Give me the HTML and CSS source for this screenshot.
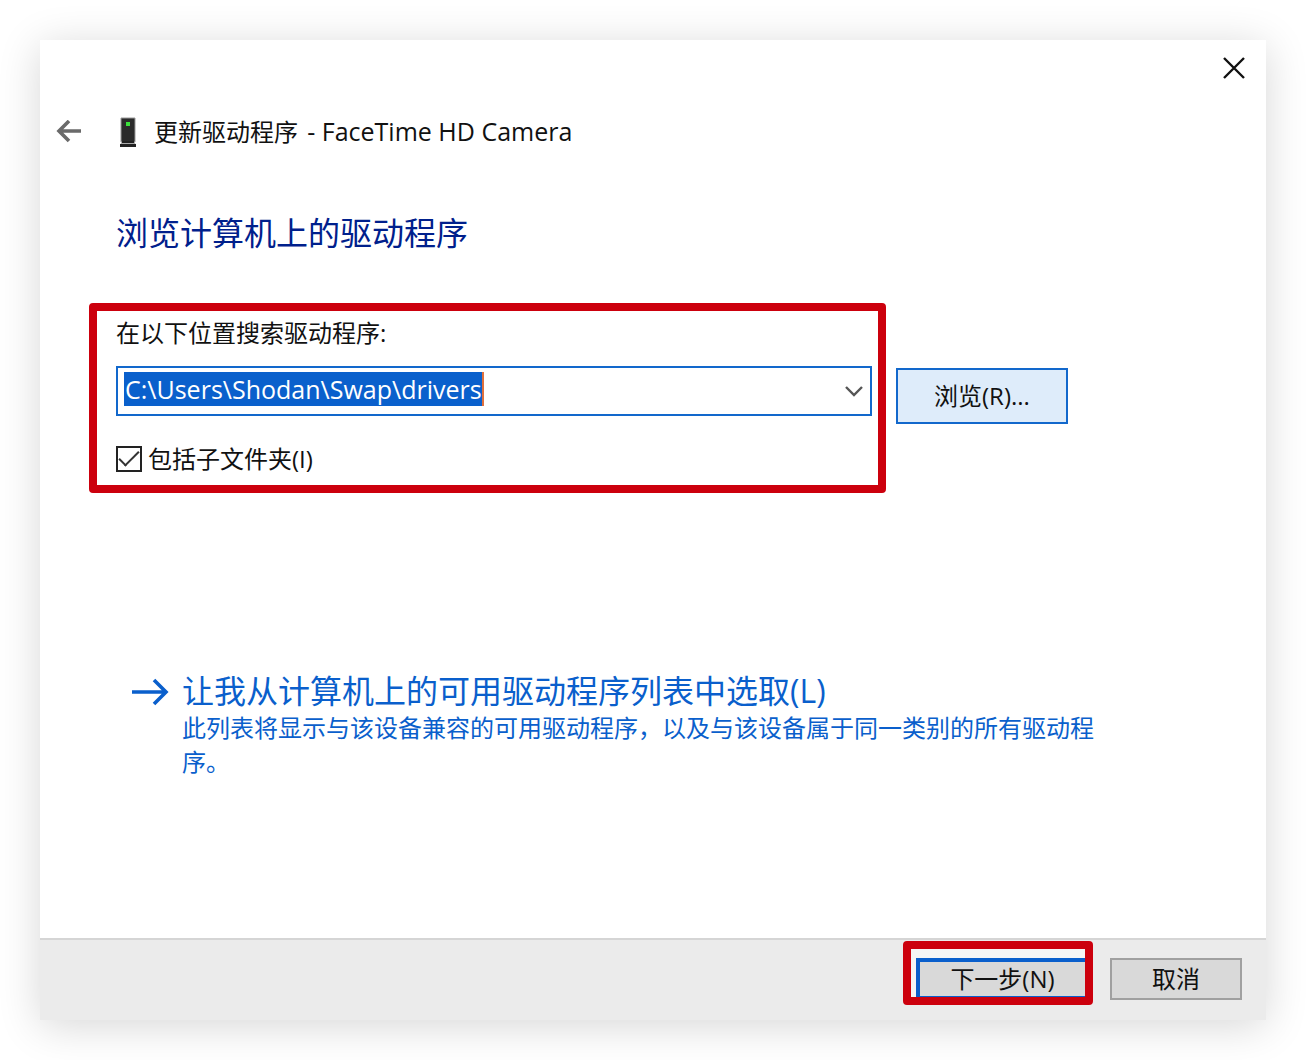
FILE: index.html
```html
<!DOCTYPE html>
<html lang="zh-CN">
<head>
	<meta charset="UTF-8">
	<title>更新驱动程序</title>
	<link rel="stylesheet" href="styles.css">
</head>
<body>
	<div class="dialog">
		<div class="titlebar">
			<button class="icon_btn" type="button" aria-label="关闭">
				<svg width="24" height="24" viewBox="0 0 24 24"><path d="M2 2L22 22M22 2L2 22" fill="none" stroke="#111" stroke-width="2.4"/></svg>
			</button>
		</div>
		<div class="header">
			<button class="icon_btn" type="button" aria-label="返回">
				<svg width="26" height="24" viewBox="0 0 26 24"><path d="M25 11H3M13 1L3 11L13 21" fill="none" stroke="#6a6a6a" stroke-width="3.6"/></svg>
			</button>
			<svg class="device" width="18" height="30" viewBox="0 0 18 30">
				<path d="M2 1H16V25H2Z" fill="#2b2b2b" stroke="#999" stroke-width="1"/>
				<path d="M3 24H15L17 28H1Z" fill="#aaa"/>
				<path d="M3 24H15V26H3ZM1 27H17V30H1Z" fill="#222"/>
				<path d="M7 5H11V9H7Z" fill="#3be03b"/>
			</svg>
			<p>更新驱动程序 <span class="device_name">- FaceTime HD Camera</span></p>
		</div>
		<div class="main">
			<h1>浏览计算机上的驱动程序</h1>
			<div class="search">
				<div class="mark">
					<label for="path">在以下位置搜索驱动程序:</label>
					<div class="combo">
						<input id="path" type="text" value="C:\Users\Shodan\Swap\drivers">
						<button class="icon_btn" type="button" aria-label="展开">
							<svg width="18" height="12" viewBox="0 0 18 12"><path d="M1 2L9 10L17 2" fill="none" stroke="#555" stroke-width="2.4"/></svg>
						</button>
					</div>
					<div class="check">
						<input id="sub" type="checkbox" checked>
						<label for="sub">包括子文件夹(I)</label>
					</div>
				</div>
				<button class="browse" type="button">浏览(R)...</button>
			</div>
			<a class="pick" href="#">
				<svg width="38" height="28" viewBox="0 0 38 28"><path d="M1 14H35M23 2L35 14L23 26" fill="none" stroke="#0a5fcc" stroke-width="3.6"/></svg>
				<span>
					<strong>让我从计算机上的可用驱动程序列表中选取(L)</strong>
					<small>此列表将显示与该设备兼容的可用驱动程序，以及与该设备属于同一类别的所有驱动程序。</small>
				</span>
			</a>
		</div>
		<div class="footer">
			<div class="mark_next">
				<button class="next" type="button">下一步(N)</button>
			</div>
			<button class="cancel" type="button">取消</button>
		</div>
	</div>
</body>
</html>
```
FILE: styles.css
```css
*{
	margin: 0;
	padding: 0;
	box-sizing: border-box;
}
body{
	min-height: 100vh;
	padding: 40px;
	display: flex;
	background: #fff;
	color: #111;
	font-family: "Open Sans", "Noto Sans CJK SC", sans-serif;
	font-size: 24px;
	line-height: 32px;
}
button{
	font: inherit;
	color: inherit;
}
svg{
	display: block;
	flex: none;
}
.dialog{
	flex: 1;
	display: flex;
	flex-direction: column;
	background: #fff;
	box-shadow: 0 6px 40px rgba(0,0,0,.16);
}
.icon_btn{
	border: none;
	background: none;
}
.titlebar{
	display: flex;
	justify-content: flex-end;
	padding: 16px 20px;
}
.header{
	display: flex;
	align-items: center;
	margin-top: 17px;
	padding: 2px 16px;
}
.device{
	margin: 0 17px 0 37px;
}
.device_name{
	margin-left: 3px;
	font-size: 25px;
}
.main{
	flex: 1;
	padding: 59px 160px 40px 49px;
}
h1{
	padding-left: 27px;
	font-size: 32px;
	line-height: 48px;
	font-weight: 400;
	color: #00208c;
}
.search{
	display: flex;
	align-items: flex-start;
	gap: 10px;
	margin-top: 46px;
	padding-right: 38px;
}
/* 红框标注 */
.mark{
	flex: 1;
	border: 8px solid #cc000d;
	border-radius: 4px;
	padding: 6px 6px 10px 19px;
}
.mark label{
	display: block;
}
.combo{
	display: flex;
	align-items: center;
	justify-content: space-between;
	height: 50px;
	margin-top: 17px;
	padding: 0 7px 0 6px;
	border: 2px solid #1268cc;
}
.combo input{
	field-sizing: content;
	height: 34px;
	margin-bottom: 4px;
	padding-left: 1px;
	border: none;
	border-right: 2px solid #e0703c;
	background: #0a60cc;
	color: #fff;
	font: inherit;
	font-size: 25px;
	outline: none;
}
.check{
	display: flex;
	align-items: center;
	gap: 6px;
	margin-top: 27px;
}
.check input{
	appearance: none;
	width: 26px;
	height: 26px;
	border: 2px solid #222;
	display: grid;
	place-items: center;
}
.check input:checked::before{
	content: '';
	width: 18px;
	height: 8px;
	margin-bottom: 6px;
	border: solid #333;
	border-width: 0 0 2px 2px;
	transform: rotate(-45deg);
}
.browse{
	width: 172px;
	height: 56px;
	margin-top: 65px;
	border: 2px solid #1268cc;
	background: #deecfa;
}
.pick{
	display: flex;
	align-items: flex-start;
	gap: 13px;
	margin-top: 178px;
	padding-left: 42px;
	color: #0a5fcc;
	text-decoration: none;
}
.pick svg{
	margin-top: 7px;
}
.pick strong{
	display: block;
	font-size: 32px;
	line-height: 40px;
	font-weight: 400;
}
.pick small{
	display: block;
	font-size: 24px;
	line-height: 34px;
}
.footer{
	display: flex;
	justify-content: flex-end;
	align-items: flex-end;
	gap: 17px;
	padding: 1px 24px 15px;
	border-top: 2px solid #d5d5d5;
	background: #ebebeb;
}
.mark_next{
	border: 8px solid #cc000d;
	border-radius: 4px;
	padding: 9px 0 0 5px;
	background: #f5f5f5;
}
.next{
	display: block;
	width: 169px;
	height: 39px;
	border: solid #0a5fcc;
	border-width: 4px 0 1px 4px;
	background: #d9d9d9;
}
.cancel{
	width: 132px;
	height: 42px;
	margin-bottom: 5px;
	border: 2px solid #a0a0a0;
	background: #d9d9d9;
}
```
